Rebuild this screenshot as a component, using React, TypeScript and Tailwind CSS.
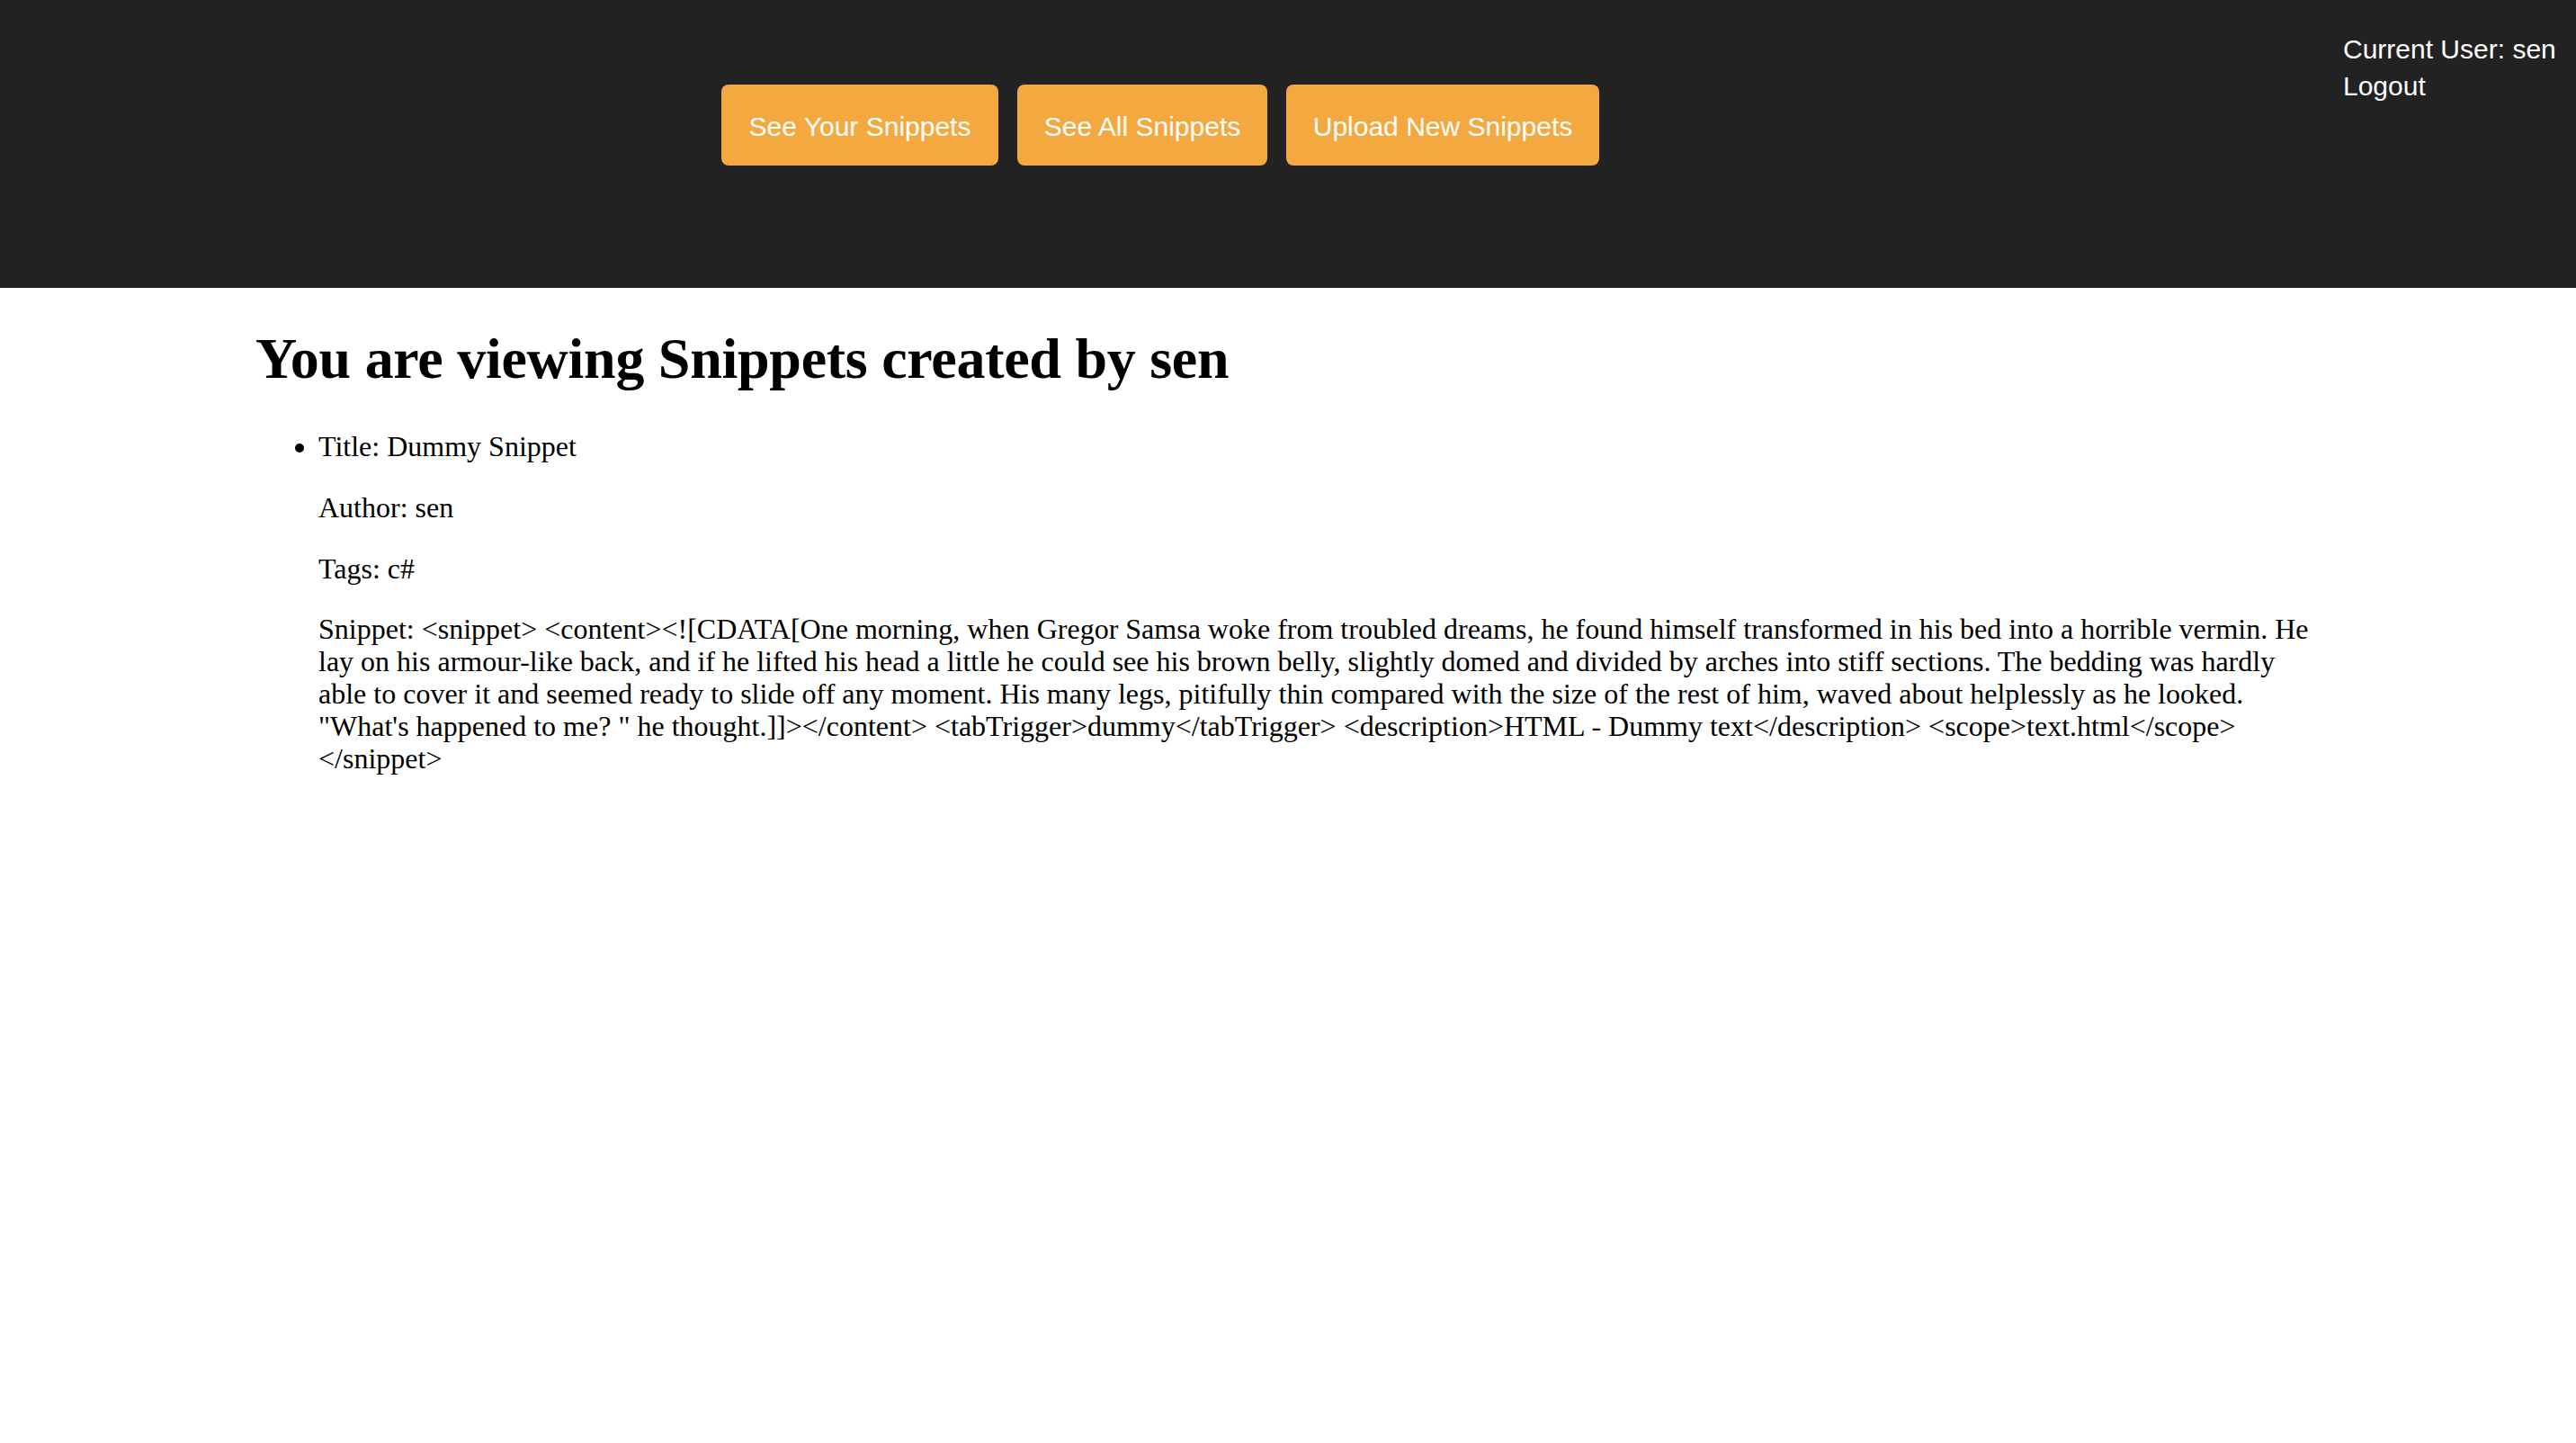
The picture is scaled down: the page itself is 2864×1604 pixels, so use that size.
import React from "react";

const SNIPPET =
  'Snippet: <snippet> <content><![CDATA[One morning, when Gregor Samsa woke from troubled dreams, he found himself transformed in his bed into a horrible vermin. He lay on his armour-like back, and if he lifted his head a little he could see his brown belly, slightly domed and divided by arches into stiff sections. The bedding was hardly able to cover it and seemed ready to slide off any moment. His many legs, pitifully thin compared with the size of the rest of him, waved about helplessly as he looked. "What\'s happened to me? " he thought.]]></content> <tabTrigger>dummy</tabTrigger> <description>HTML - Dummy text</description> <scope>text.html</scope> </snippet>';

export default function App() {
  const btn =
    "h-[90px] rounded-[8px] bg-[#f4a940] pt-[30px] pb-[26px] text-center text-[30px] leading-[34px] text-white whitespace-nowrap";
  return (
    <div className="min-h-screen bg-white text-black [font-family:'Liberation_Serif','Times_New_Roman',serif]">
      <header className="flex h-[320px] items-start bg-[#222222] [font-family:'Liberation_Sans',Arial,sans-serif]">
        <nav className="ml-[802px] mt-[94px] flex gap-[21px]">
          <button className={btn + " w-[308px]"}>See Your Snippets</button>
          <button className={btn + " w-[278px]"}>See All Snippets</button>
          <button className={btn + " w-[348px]"}>Upload New Snippets</button>
        </nav>
        <div className="ml-auto mt-[34px] w-[259px] text-[30px] leading-[41px] text-white">
          <div>Current User: sen</div>
          <div>Logout</div>
        </div>
      </header>
      <main className="pl-[284px] pr-[274px]">
        <h1 className="mt-[42px] mb-[42px] text-[64px] font-bold leading-[74px] tracking-[-0.27px]">
          You are viewing Snippets created by sen
        </h1>
        <ul className="list-disc pl-[70px] text-[32px] leading-[36px]">
          <li>
            <div>Title: Dummy Snippet</div>
            <p className="mt-[32px]">Author: sen</p>
            <p className="mt-[32px]">Tags: c#</p>
            <p className="mt-[31px]">{SNIPPET}</p>
          </li>
        </ul>
      </main>
    </div>
  );
}
